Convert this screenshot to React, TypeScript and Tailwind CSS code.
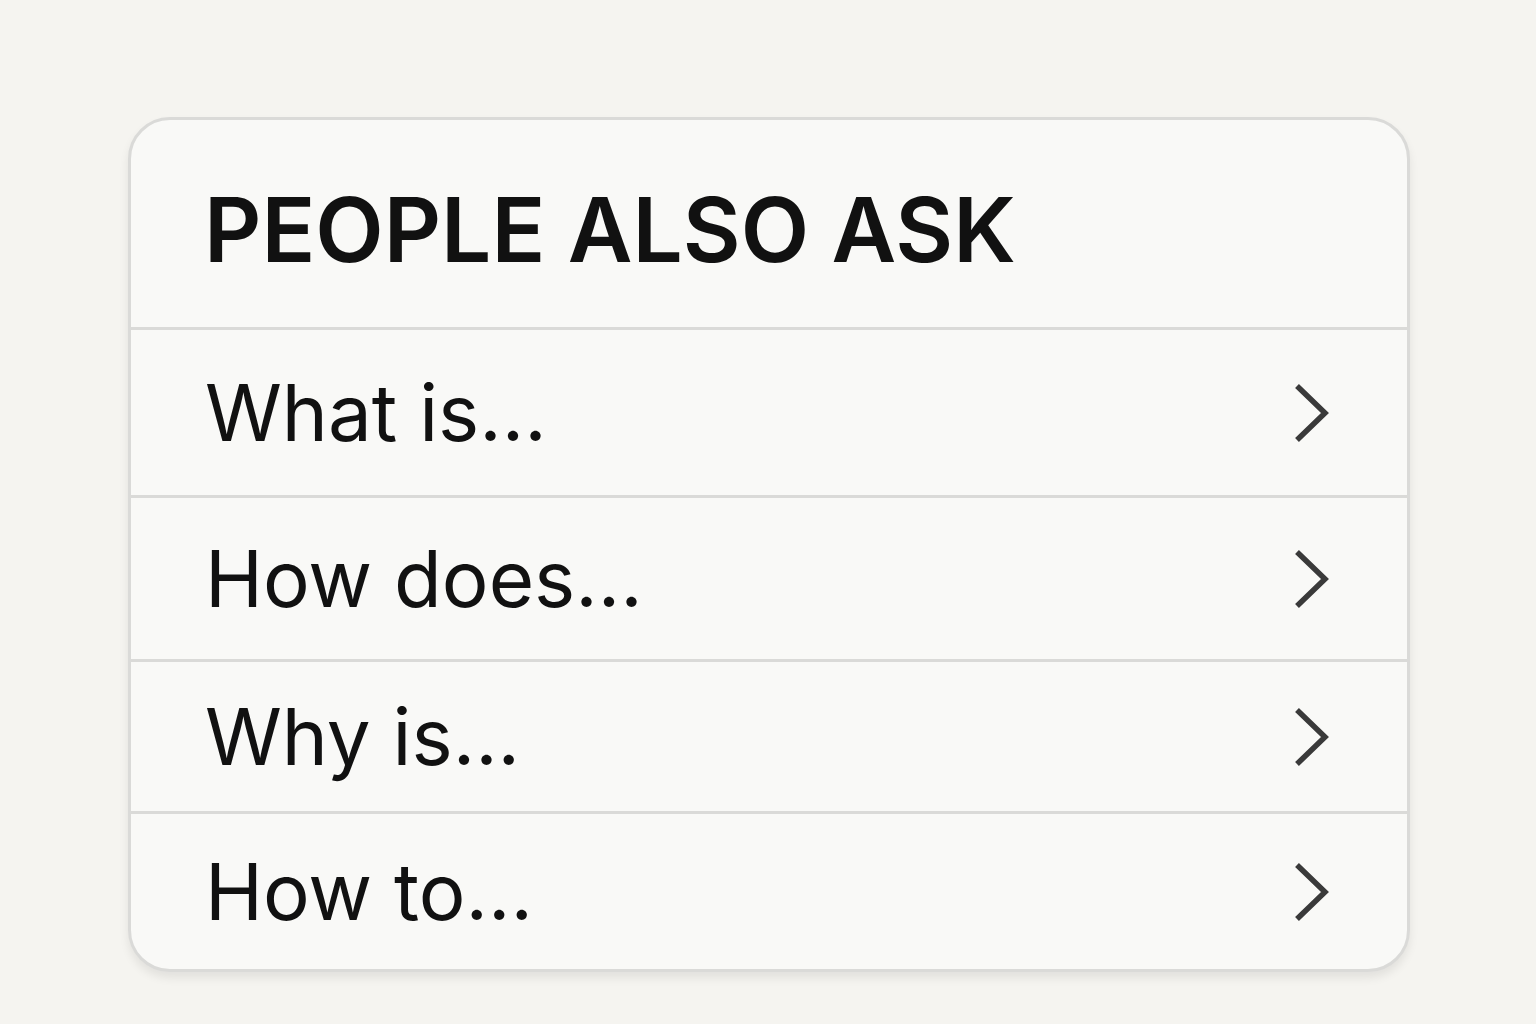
import React from "react";

const rows = [
  { label: "What is...", h: "h-[168px]" },
  { label: "How does...", h: "h-[164px]" },
  { label: "Why is...", h: "h-[152px]" },
  { label: "How to...", h: "h-[158px]" },
];

function Chevron() {
  return (
    <svg width="40" height="60" viewBox="0 0 40 60" fill="none">
      <path d="M6 3 L34 30 L6 57" stroke="#3a3a3a" strokeWidth="5.5" strokeLinecap="butt" strokeLinejoin="miter" />
    </svg>
  );
}

export default function App() {
  return (
    <div className="min-h-[1024px] w-full bg-[#f5f4f0] pt-[117px] pl-[128px]" style={{ fontFamily: "Inter, 'Noto Sans', sans-serif" }}>
      <div className="w-[1282px] rounded-[42px] border-[3px] border-[#dadad8] bg-[#f9f9f7] shadow-[0_6px_10px_rgba(0,0,0,0.08)] overflow-hidden">
        <div className="h-[207px] flex items-center pl-[73px] pt-[12px]">
          <h1 className="text-[89px] font-semibold text-[#111] leading-none">PEOPLE ALSO ASK</h1>
        </div>
        {rows.map((r) => (
          <div key={r.label} className={`${r.h} border-t-[3px] border-[#dadad8] flex items-center justify-between pl-[74px] pr-[76px]`}>
            <span className="text-[78px] font-normal text-[#111] leading-none">{r.label}</span>
            <Chevron />
          </div>
        ))}
      </div>
    </div>
  );
}
